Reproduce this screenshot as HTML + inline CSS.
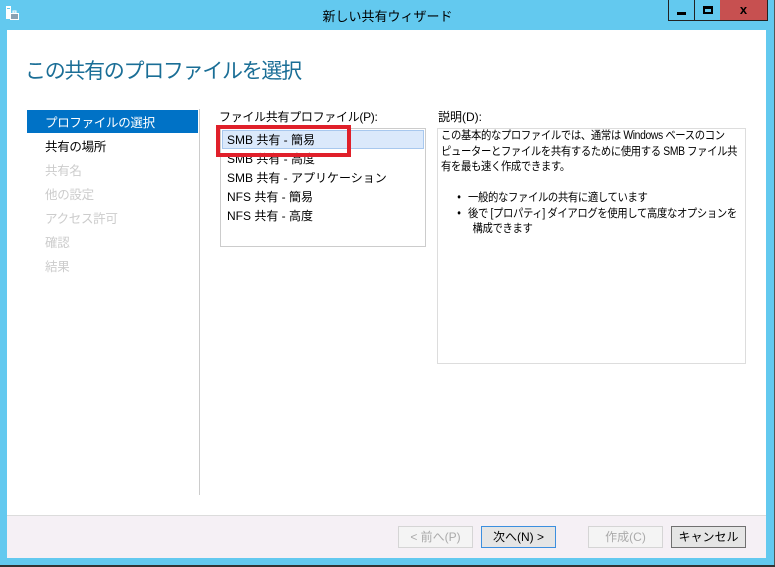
<!DOCTYPE html>
<html><head><meta charset="utf-8"><style>
*{margin:0;padding:0;box-sizing:border-box}
body{width:775px;height:567px;overflow:hidden;background:#fff;font-family:"Liberation Sans","Noto Sans CJK JP",sans-serif;font-size:12px;color:#000;position:relative}
.a{position:absolute}
</style></head><body>
<div class="a" style="left:0;top:0;width:774px;height:565px;background:#63c9ef"></div>
<div class="a" style="left:0;top:565px;width:775px;height:2px;background:#333"></div>
<div class="a" style="left:774px;top:0;width:1px;height:565px;background:#555"></div>
<svg class="a" style="left:5px;top:5px" width="14" height="16" viewBox="0 0 14 16"><rect x="1" y="1" width="5" height="13" fill="#fff"/><rect x="2" y="3" width="3" height="1" fill="#63c9ef"/><rect x="5" y="8" width="9" height="7" fill="#fff"/><rect x="6" y="9" width="7" height="5" fill="#8aa2b3"/><rect x="8" y="6" width="3" height="2" fill="none" stroke="#fff"/></svg>
<div class="a" style="left:0;top:6px;width:775px;text-align:center;font-size:13px;color:#000">新しい共有ウィザード</div>
<div class="a" style="left:668px;top:0;width:27px;height:21px;border:1px solid #222;border-top:none"></div>
<div class="a" style="left:677px;top:12px;width:9px;height:3px;background:#000"></div>
<div class="a" style="left:694px;top:0;width:27px;height:21px;border:1px solid #222;border-top:none;border-left:none"></div>
<div class="a" style="left:703px;top:6px;width:10px;height:8px;border:2px solid #000;border-top-width:3px"></div>
<div class="a" style="left:720px;top:0;width:48px;height:21px;background:#c75050;border:1px solid #222;border-top:none;border-left:none;text-align:center;font-weight:bold;font-size:13px;line-height:19px">x</div>
<div class="a" style="left:7px;top:30px;width:759px;height:528px;background:#fff"></div>
<div class="a" style="left:25px;top:55px;font-size:21px;color:#1a6e96;letter-spacing:-1.3px">この共有のプロファイルを選択</div>
<div class="a" style="left:27px;top:110px;width:171px;height:23px;background:#0072c6"></div>
<div class="a" style="left:199px;top:109px;width:1px;height:386px;background:#ccc"></div>
<div class="a" style="left:45px;top:114px;color:#fff;font-size:12.5px;line-height:24px;letter-spacing:-0.3px">
<div style="margin-top:-3px">プロファイルの選択</div>
<div style="color:#000">共有の場所</div>
<div style="color:#ccc">共有名</div>
<div style="color:#ccc">他の設定</div>
<div style="color:#ccc">アクセス許可</div>
<div style="color:#ccc">確認</div>
<div style="color:#ccc">結果</div>
</div>
<div class="a" style="left:219px;top:108px;font-size:12px;letter-spacing:-0.3px">ファイル共有プロファイル(P):</div>
<div class="a" style="left:220px;top:128px;width:206px;height:119px;border:1px solid #ccc"></div>
<div class="a" style="left:222px;top:130px;width:202px;height:19px;background:#dbe9fb;border:1px solid #a8c8ee"></div>
<div class="a" style="left:227px;top:131px;line-height:19px">
<div>SMB 共有 - 簡易</div><div>SMB 共有 - 高度</div><div>SMB 共有 - アプリケーション</div><div>NFS 共有 - 簡易</div><div>NFS 共有 - 高度</div>
</div>
<div class="a" style="left:216px;top:125px;width:135px;height:32px;border:4px solid #e0202a"></div>
<div class="a" style="left:438px;top:108px">説明(D):</div>
<div class="a" style="left:437px;top:128px;width:309px;height:236px;border:1px solid #ddd"></div>
<div class="a" style="left:441px;top:129px;line-height:15.5px;font-size:11.5px;white-space:nowrap;letter-spacing:-0.4px;transform:scaleX(0.9);transform-origin:0 0">この基本的なプロファイルでは、通常は Windows ベースのコン<br>ピューターとファイルを共有するために使用する SMB ファイル共<br>有を最も速く作成できます。<br><br>
<div style="padding-left:18px">•&nbsp;&nbsp; 一般的なファイルの共有に適しています</div>
<div style="padding-left:18px">•&nbsp;&nbsp; 後で [プロパティ] ダイアログを使用して高度なオプションを</div>
<div style="padding-left:35px">構成できます</div>
</div>
<div class="a" style="left:7px;top:515px;width:759px;height:43px;background:#f5f0f5;border-top:1px solid #dcdcdc"></div>
<div class="a" style="left:398px;top:526px;width:75px;height:22px;border:1px solid #d5d5d5;background:#f4f4f4;color:#aaa;text-align:center;line-height:20px">&lt; 前へ(P)</div>
<div class="a" style="left:481px;top:526px;width:75px;height:22px;border:1px solid #3c8fdf;background:#e5e5e5;text-align:center;line-height:20px">次へ(N) &gt;</div>
<div class="a" style="left:588px;top:526px;width:75px;height:22px;border:1px solid #d5d5d5;background:#f4f4f4;color:#aaa;text-align:center;line-height:20px">作成(C)</div>
<div class="a" style="left:671px;top:526px;width:75px;height:22px;border:1px solid #707070;background:#e5e5e5;text-align:center;line-height:20px">キャンセル</div>
</body></html>
